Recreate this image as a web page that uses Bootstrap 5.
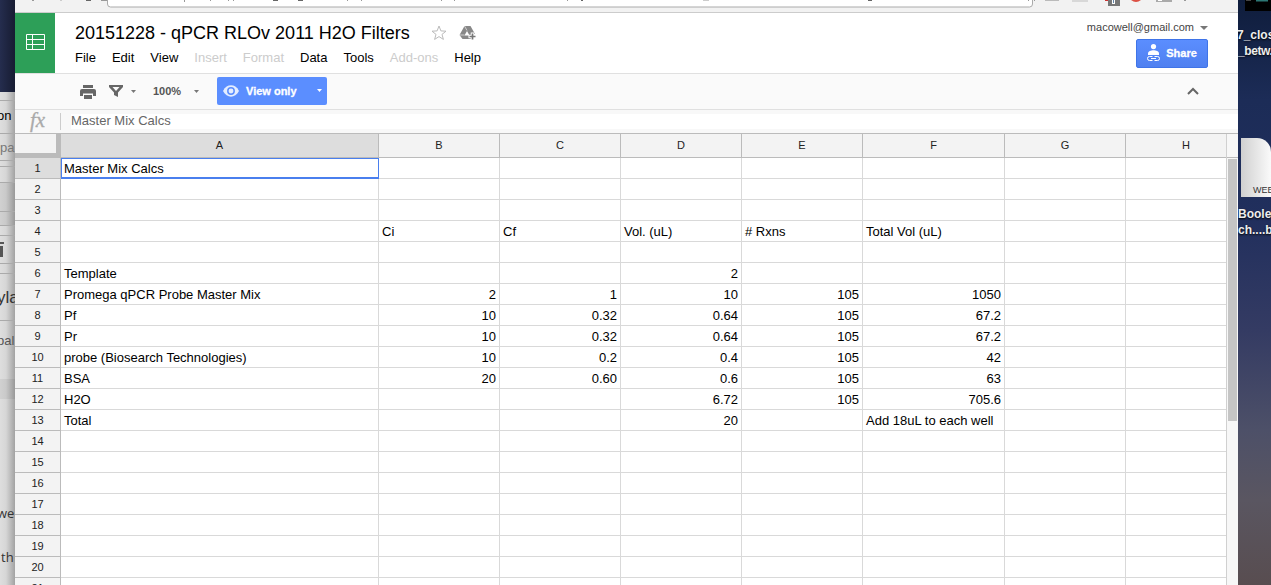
<!DOCTYPE html>
<html lang="en">
<head>
<meta charset="utf-8">
<title>20151228 - qPCR RLOv 2011 H2O Filters</title>
<link href="https://cdn.jsdelivr.net/npm/bootstrap@5.3.0/dist/css/bootstrap.min.css" rel="stylesheet">
<style>
body{width:1271px;height:585px;overflow:hidden;font-family:"Liberation Sans",Arial,sans-serif;font-size:13px;line-height:1;color:#000}
svg{display:block;flex:none}
.left-desk{width:15px;background:linear-gradient(90deg,#dedede 0,#d6d6d6 40%,#a2a2a2 100%)}
.left-desk>div{box-sizing:border-box;flex:none;white-space:nowrap;overflow:hidden;display:flex;align-items:center;border-bottom:1px solid #aaa}
.left-desk .humanist{font-family:"Open Sans","Noto Sans",sans-serif}
.night{height:92px;background:linear-gradient(90deg,#252d4e,#171c32)}
.shade{background:rgba(0,0,0,.06)}
.window{width:1223px;background:#fff}
.chrome-strip{height:13px;background:#f2f2f2;border-bottom:1px solid #ccc}
.doc-head{height:61px;border-bottom:1px solid #e0e0e0}
.logo-tile{width:40px;height:60px;padding:0 0 2px 2px;background:#2d9f58}
.doc-title{font-size:18px;line-height:22px}
.menu-row span{white-space:nowrap}
.off{color:#ccc}
.tools{height:36px;background:#fafafa;border-bottom:1px solid #e0e0e0}
.zoom-label{font-size:11px;font-weight:bold;color:#555}
.view-btn{width:110px;height:28px;margin-bottom:2px;background:#5b8eff;border-radius:2px;color:#fff;font-size:11px;font-weight:bold;-webkit-text-stroke:.3px #fff}
.share-btn{width:72px;height:29px;background:linear-gradient(#5b8eff,#4f80f0);border:1px solid #3f74e8;border-radius:2px;color:#fff;font-size:11px;font-weight:bold}
.share-btn span{-webkit-text-stroke:.3px #fff}
.account{font-size:11px;color:#444}
.fx-bar{height:24px;background:linear-gradient(#f8f8f8 4px,#fff 4px,#fff 19px,#f8f8f8 19px);border-bottom:1px solid #bbb;color:#666}
.fx-sign{width:45px;height:23px;background:#f8f8f8;font:italic 21px/21px "Liberation Serif",serif;color:#aaa;-webkit-text-stroke:.3px #aaa}
.fx-sep{width:1px;height:17px;background:#ccc}
.fx-gap{width:10px;height:23px;background:#f8f8f8}
.sheet-view{width:1212px;border-right:1px solid #d0d0d0}
.sheet{width:1232px;display:grid;grid-template-columns:46px 318px 121px 121px 121px 121px 142px 121px 121px;grid-auto-rows:21px;grid-template-rows:24px}
.sheet>div{border-right:1px solid #d9d9d9;border-bottom:1px solid #d9d9d9;padding:0 3px;display:flex;align-items:center;white-space:nowrap;overflow:hidden}
.sheet>.head{background:#f3f3f3;border-color:#bbb;justify-content:center;font-size:11px;color:#222}
.sheet>.picked{background:#ddd}
.sheet>.corner{border-right:5px solid #bbb;border-bottom:5px solid #bbb;background:#f3f3f3}
.sheet>.num{justify-content:flex-end}
.sheet>.active-cell{box-shadow:inset 0 1px #4a7fee,inset 1px 0 #4a7fee,inset 0 -1px #4a7fee;border-color:#4a7fee}
.scroller{width:11px;background:#f7f7f7}
.scroller .gap-top{height:24px;border-bottom:1px solid #bbb}
.thumb{width:9px;height:262px;background:#c5c5c5;margin:1px 0 0 1px}
.right-desk{width:33px;background:linear-gradient(#0f1d3c 0,#1c2c57 100px,#212f5d 220px,#343b63 330px,#4d5068 430px,#5a5661 500px,#584d50 585px);color:#eee;font-weight:bold;font-size:12px}
.right-desk .label{line-height:16px;white-space:nowrap;text-shadow:0 1px 2px #000}
.webloc{width:30px;height:59px;margin-left:3px;background:linear-gradient(90deg,#d0d0d0,#fafafa);border-top-right-radius:14px;font-size:9px;font-weight:normal;color:#333}
</style>
</head>
<body>
<main class="d-flex h-100 overflow-hidden">
  <aside class="left-desk d-flex flex-column overflow-hidden">
    <div class="night border-0"></div>
    <div style="height:9px"></div>
    <div style="height:33px;padding-bottom:4px"><span style="margin-left:-3px">on</span></div>
    <div style="height:27px;color:#777">pa</div>
    <div style="height:6px"></div>
    <div style="height:16px"></div>
    <div class="shade" style="height:29px"></div>
    <div class="shade" style="height:14px"></div>
    <div style="height:10px"></div>
    <div style="height:28px"><svg width="6" height="15"><path d="M0 0h4v2H0zM0 4h3v11H0z" fill="#555"/></svg></div>
    <div style="height:10px"></div>
    <div style="height:47px;font-size:17px;color:#333"><span style="margin-left:-3px">yla</span></div>
    <div class="border-0" style="height:39px;color:#555"><span style="margin-left:-3px">pal</span></div>
    <div class="border-0" style="height:19px"></div>
    <div class="shade border-0" style="height:20px"></div>
    <div class="border-0" style="height:94px"></div>
    <div class="humanist border-0" style="height:44px;color:#333;padding-bottom:3px"><span style="margin-left:-3px">we</span></div>
    <div class="humanist border-0" style="height:44px;color:#333;padding-bottom:3px"><span style="margin-left:1px">th</span></div>
  </aside>
  <section class="window d-flex flex-column flex-shrink-0">
    <div class="chrome-strip flex-shrink-0">
      <svg width="1223" height="12" fill="none">
        <path d="M92.500 0v4q0 3 3 3h919q3 0 3-3V0" fill="#fff" stroke="#aaa"/>
        <path d="M17 .5h2M86 .5h6M169.500 0v2M195 .5h1M213 .5h1M218 .5h1M332 .5h1M346 .5h1M426 .5h1M439 .5h1M552 .5h1M1013 .5h1M1019 .5h1M1169 .5h2" stroke="#999"/>
        <path d="M45 .5h2M688 .5h6" stroke="#ccc"/>
        <path d="M71 .5h5M258 .5h5M283 .5h5M566 .5h2M853 .5h4" stroke="#666"/>
        <path d="M1030 .5h14" stroke="#bbb"/><path d="M1057 1h16" stroke="#d8d8d8" stroke-width="2"/>
        <path d="M1090 .5h3" stroke="#c33"/><path d="M1093 0h12v6h-12z" fill="#777"/><path d="M1098.500 0v4" stroke="#fff" stroke-width="3"/><path d="M1098.500 0v3" stroke="#68a"/>
        <path d="M1116 0h10q-5 4-10 0z" fill="#dc5044"/>
        <path d="M1141 0h16v2h-16z" fill="#aaa"/><path d="M1143 .5h4" stroke="#fff"/>
      </svg>
    </div>
    <header class="doc-head d-flex flex-shrink-0">
      <div class="logo-tile d-flex align-items-center justify-content-center">
        <svg width="20" height="17" fill="none" stroke="#fff"><path d="M.5.5h18v15H.5zM.5 5.500h18M.5 10.500h18M6.500.5v15"/></svg>
      </div>
      <div class="flex-grow-1 ps-3">
        <div class="d-flex align-items-center" style="padding:9px 0 0 4px">
          <span class="doc-title">20151228 - qPCR RLOv 2011 H2O Filters</span>
          <svg style="margin-left:21px" width="16" height="16" viewBox="0 0 16 16" fill="none" stroke="#bbb"><path d="m8 1 1.900 4.900 5.100.3-4 3.200 1.400 5L8 11.600 3.600 14.400l1.400-5-4-3.200 5.100-.3z"/></svg>
          <svg style="margin-left:12px" width="18" height="16" viewBox="0 0 18 16"><path d="M5.500 1h6l4.500 8h-3v5H3.500L.5 10z" fill="#888"/><path d="M8 6 5.500 10.500h5z" fill="#fff"/><path d="M5.500 1 8 5.500M.5 10h5" stroke="#fff" stroke-width=".6"/><path d="M13.500 7.500v8M9.500 11.500h8" stroke="#fff" stroke-width="3.500"/><path d="M13.500 8.500v6M10.500 11.500h6" stroke="#777" stroke-width="1.700"/></svg>
        </div>
        <div class="menu-row d-flex" style="padding:7px 0 0 4px;gap:16px">
          <span>File</span><span>Edit</span><span>View</span><span class="off">Insert</span><span class="off">Format</span><span>Data</span><span>Tools</span><span class="off">Add-ons</span><span>Help</span>
        </div>
      </div>
      <div class="d-flex flex-column align-items-end" style="padding:9px 30px 0 0">
        <div class="account d-flex align-items-center" style="gap:6px;height:11px">macowell@gmail.com <svg width="8" height="4"><path d="M0 0h8L4 4z" fill="#777"/></svg></div>
        <div class="share-btn d-flex align-items-center justify-content-center" style="margin-top:6px;gap:6px">
          <svg width="13" height="17" fill="#fff" style="margin-bottom:2px"><circle cx="6.500" cy="2.600" r="2.600"/><path d="M1 11V9.500C1 7.500 4 6.300 6.500 6.300S12 7.500 12 9.500V11z"/><path d="M5.500 12.500h-3a2 2 0 0 0 0 4h3M7.500 12.500h3a2 2 0 0 1 0 4h-3M4 14.500h5" fill="none" stroke="#fff"/></svg>
          <span>Share</span>
        </div>
      </div>
    </header>
    <div class="tools d-flex align-items-center flex-shrink-0" style="padding-left:65px">
      <svg width="16" height="14" fill="#666"><path d="M3 0h10v3H3zM2 4h12a2 2 0 0 1 2 2v5h-3V8.500H3V11H0V6a2 2 0 0 1 2-2zM4 10h8v4H4z"/></svg>
      <svg style="margin-left:13px" width="15" height="13"><path fill-rule="evenodd" d="M0 0h14v2L9 7.500V12L5 10V7.500L0 2zM3.500 2 7 6l3.500-4z" fill="#666"/></svg>
      <svg style="margin-left:7px" width="5" height="3"><path d="M0 0h5L2.500 3z" fill="#777"/></svg>
      <span class="zoom-label" style="margin-left:17px;width:29px">100%</span>
      <svg style="margin-left:12px" width="5" height="3"><path d="M0 0h5L2.500 3z" fill="#777"/></svg>
      <div class="view-btn d-flex align-items-center" style="margin-left:18px;padding:0 5px 0 6px">
        <svg width="16" height="12"><path d="M0 6C2 2 5 .3 8 .3S14 2 16 6c-2 4-5 5.700-8 5.700S2 10 0 6z" fill="#e4edff"/><circle cx="8" cy="6" r="3.200" fill="none" stroke="#5b8eff" stroke-width="1.500"/></svg>
        <span style="margin-left:7px;padding-top:1px">View only</span>
        <svg class="ms-auto" width="5" height="3"><path d="M0 0h5L2.500 3z" fill="#fff"/></svg>
      </div>
      <svg class="ms-auto" style="margin:0 39px 2px 0" width="12" height="8"><path d="m1 7 5-5 5 5" fill="none" stroke="#666" stroke-width="2"/></svg>
    </div>
    <div class="fx-bar d-flex align-items-start flex-shrink-0">
      <div class="fx-sign text-center">fx</div><div class="fx-sep" style="margin-top:3px"></div><div class="fx-gap"></div><span style="line-height:21px">Master Mix Calcs</span>
    </div>
    <div class="d-flex flex-grow-1 overflow-hidden">
      <div class="sheet-view flex-shrink-0 overflow-hidden"><div class="sheet" id="sheet"></div></div>
      <div class="scroller"><div class="gap-top"></div><div class="thumb"></div></div>
    </div>
  </section>
  <aside class="right-desk overflow-hidden">
    <svg width="33" height="27"><path d="M7 0h26v11H7z" fill="#000"/><path d="M8 .5h5" stroke="#444"/><path d="M18 .5h12" stroke="#2c7774" stroke-width="2"/></svg>
    <div class="label" style="margin-left:-1px">7_clos</div>
    <div class="label" style="letter-spacing:-.4px">_betw.</div>
    <div class="webloc d-flex align-items-end" style="margin-top:79px;padding:0 0 2px 12px">WEB</div>
    <div class="label" style="margin-top:9px">Boole<br>ch....b</div>
  </aside>
</main>
<script src="https://cdn.jsdelivr.net/npm/bootstrap@5.3.0/dist/js/bootstrap.bundle.min.js"></script>
<script>
const cells = {
  1: ['Master Mix Calcs'],
  4: ['', 'Ci', 'Cf', 'Vol. (uL)', '# Rxns', 'Total Vol (uL)'],
  6: ['Template', '', '', '2'],
  7: ['Promega qPCR Probe Master Mix', '2', '1', '10', '105', '1050'],
  8: ['Pf', '10', '0.32', '0.64', '105', '67.2'],
  9: ['Pr', '10', '0.32', '0.64', '105', '67.2'],
  10: ['probe (Biosearch Technologies)', '10', '0.2', '0.4', '105', '42'],
  11: ['BSA', '20', '0.60', '0.6', '105', '63'],
  12: ['H2O', '', '', '6.72', '105', '705.6'],
  13: ['Total', '', '', '20', '', 'Add 18uL to each well']
};
const sheet = document.getElementById('sheet');
const add = (text, cls) => {
  const d = document.createElement('div');
  d.textContent = text;
  d.className = cls;
  sheet.append(d);
};
add('', 'corner');
[...'ABCDEFGH'].forEach(c => add(c, c === 'A' ? 'head picked' : 'head'));
for (let r = 1; r <= 21; r++) {
  add(r, r === 1 ? 'head picked' : 'head');
  for (let c = 0; c < 8; c++) {
    const t = (cells[r] || [])[c] || '';
    add(t, r === 1 && c === 0 ? 'active-cell' : t && !isNaN(t) ? 'num' : '');
  }
}
</script>
</body>
</html>
